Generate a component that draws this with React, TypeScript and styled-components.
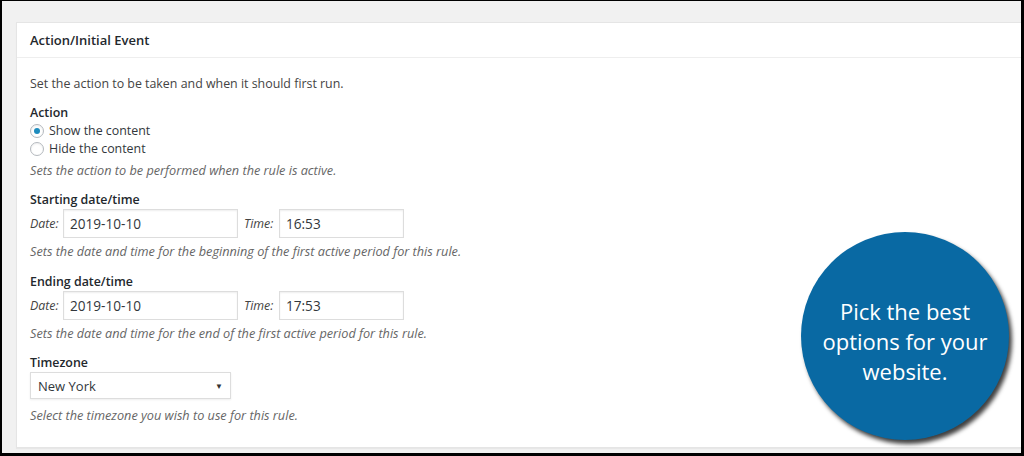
import React from "react";
import styled, { createGlobalStyle } from "styled-components";

const GlobalStyle = createGlobalStyle`
  html, body {
    margin: 0;
    padding: 0;
    background: #000;
  }
  body {
    font-family: "Open Sans", "Noto Sans", sans-serif;
    color: #23282d;
  }
`;

const Frame = styled.div`
  position: relative;
  margin: 1px 3px 3px 2px;
  height: 452px;
  padding: 21px 0 0 14px;
  box-sizing: border-box;
  background: #f1f1f1;
  overflow: hidden;
`;

const Panel = styled.div`
  margin-right: -10px;
  height: 426px;
  box-sizing: border-box;
  background: #fff;
  border: 1px solid #e5e5e5;
  box-shadow: 0 1px 1px rgba(0, 0, 0, 0.04);
`;

const PanelHeader = styled.div`
  height: 34px;
  display: flex;
  align-items: center;
  padding: 0 13px;
  border-bottom: 1px solid #eee;
  font-size: 13px;
  font-weight: 600;
  color: #23282d;
`;

const PanelBody = styled.div`
  padding: 17px 13px 0;
  font-size: 12.4px;
  color: #444;
`;

const Intro = styled.p`
  margin: 0 0 11px;
  line-height: 18px;
`;

const Field = styled.div<{ $gap?: number }>`
  margin-bottom: ${(p) => p.$gap ?? 12}px;
`;

const Label = styled.div`
  font-weight: 600;
  color: #23282d;
  line-height: 18px;
`;

const RadioRow = styled.label`
  display: flex;
  align-items: center;
  gap: 5px;
  line-height: 18px;
  color: #32373c;
`;

const Radio = styled.span<{ $checked?: boolean }>`
  width: 14px;
  height: 14px;
  box-sizing: border-box;
  border-radius: 50%;
  border: 1px solid #b4b9be;
  box-shadow: inset 0 1px 2px rgba(0, 0, 0, 0.07);
  display: flex;
  align-items: center;
  justify-content: center;

  &::after {
    content: "";
    display: ${(p) => (p.$checked ? "block" : "none")};
    width: 6px;
    height: 6px;
    border-radius: 50%;
    background: #1e8cbe;
  }
`;

const Help = styled.p<{ $top?: number }>`
  margin: ${(p) => p.$top ?? 4}px 0 0;
  font-style: italic;
  font-size: 12.7px;
  color: #666;
  line-height: 18px;
`;

const InputRow = styled.div`
  display: flex;
  align-items: center;
`;

const InlineLabel = styled.span<{ $width: number }>`
  width: ${(p) => p.$width}px;
  font-style: italic;
  color: #444;
`;

const TextInput = styled.div<{ $width: number }>`
  width: ${(p) => p.$width}px;
  height: 29px;
  box-sizing: border-box;
  border: 1px solid #ddd;
  box-shadow: inset 0 1px 2px rgba(0, 0, 0, 0.07);
  padding: 0 6px;
  display: flex;
  align-items: center;
  font-size: 13.6px;
  color: #32373c;
  margin-right: 6px;
`;

const Select = styled.div`
  width: 201px;
  height: 27px;
  box-sizing: border-box;
  border: 1px solid #ddd;
  box-shadow: 0 1px 2px rgba(0, 0, 0, 0.07);
  padding: 0 7px 0 7px;
  display: flex;
  align-items: center;
  justify-content: space-between;
  font-size: 13px;
  color: #32373c;
`;

const Caret = styled.span`
  font-size: 8px;
  color: #333;
`;

const Bubble = styled.div`
  position: absolute;
  left: 799px;
  top: 231px;
  width: 208px;
  height: 208px;
  border-radius: 50%;
  background: #0969a3;
  box-shadow: 3px 4px 4px rgba(0, 0, 0, 0.75);
  display: flex;
  align-items: center;
  justify-content: center;
  text-align: center;
  color: #fff;
  font-family: "Open Sans", sans-serif;
  font-size: 22px;
  line-height: 30px;
  padding-top: 10px;
  box-sizing: border-box;
`;

const DateTimeField: React.FC<{
  title: string;
  date: string;
  time: string;
  help: string;
  gap: number;
}> = ({ title, date, time, help, gap }) => (
  <Field $gap={gap}>
    <Label>{title}</Label>
    <InputRow>
      <InlineLabel $width={33}>Date:</InlineLabel>
      <TextInput $width={175}>{date}</TextInput>
      <InlineLabel $width={35}>Time:</InlineLabel>
      <TextInput $width={125}>{time}</TextInput>
    </InputRow>
    <Help>{help}</Help>
  </Field>
);

export default function App() {
  return (
    <>
      <GlobalStyle />
      <Frame>
        <Panel>
          <PanelHeader>Action/Initial Event</PanelHeader>
          <PanelBody>
            <Intro>Set the action to be taken and when it should first run.</Intro>

            <Field $gap={12}>
              <Label>Action</Label>
              <RadioRow>
                <Radio $checked />
                Show the content
              </RadioRow>
              <RadioRow>
                <Radio />
                Hide the content
              </RadioRow>
              <Help $top={3}>Sets the action to be performed when the rule is active.</Help>
            </Field>

            <DateTimeField
              title="Starting date/time"
              date="2019-10-10"
              time="16:53"
              gap={13}
              help="Sets the date and time for the beginning of the first active period for this rule."
            />

            <DateTimeField
              title="Ending date/time"
              date="2019-10-10"
              time="17:53"
              gap={12}
              help="Sets the date and time for the end of the first active period for this rule."
            />

            <Field>
              <Label>Timezone</Label>
              <Select>
                New York
                <Caret>▼</Caret>
              </Select>
              <Help $top={7}>Select the timezone you wish to use for this rule.</Help>
            </Field>
          </PanelBody>
        </Panel>
        <Bubble>
          Pick the best
          <br />
          options for your
          <br />
          website.
        </Bubble>
      </Frame>
    </>
  );
}
